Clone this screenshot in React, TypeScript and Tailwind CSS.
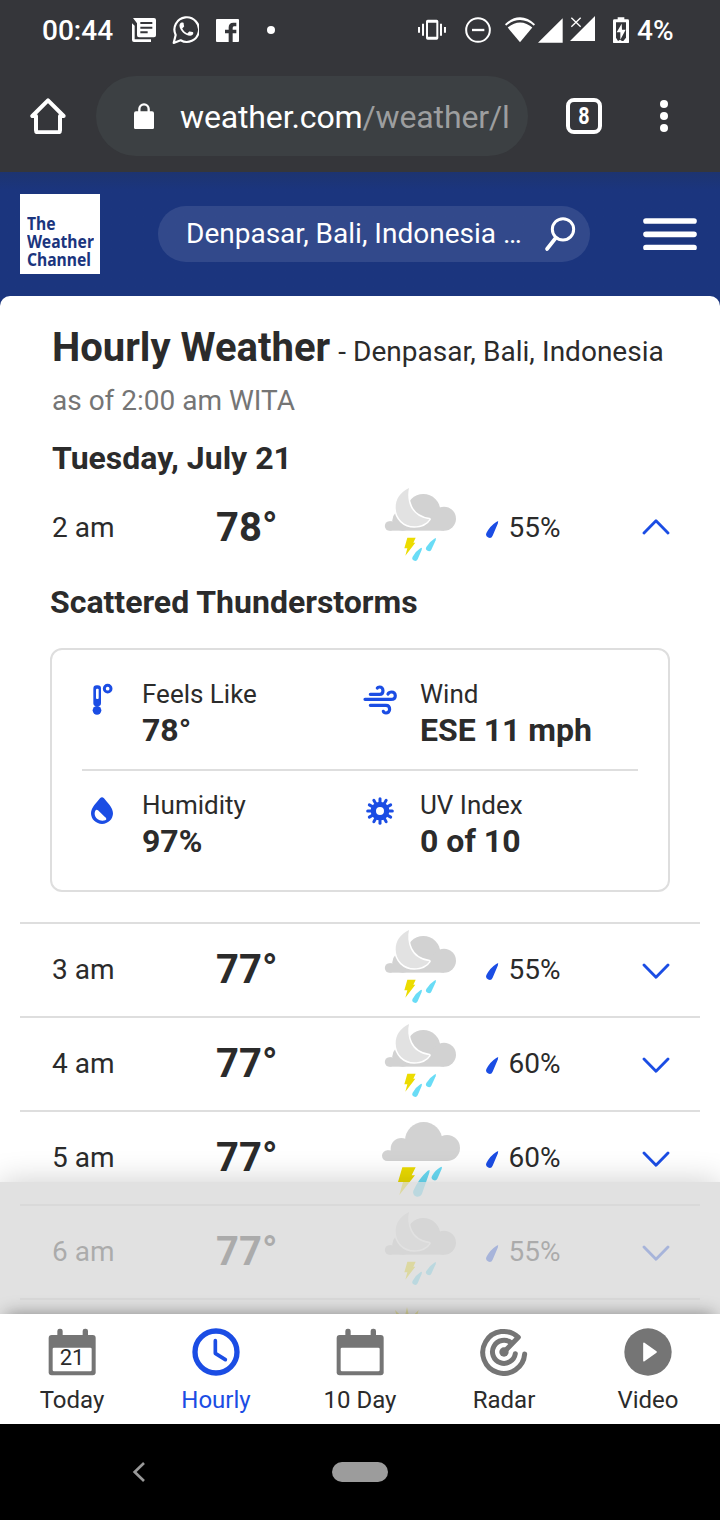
import type { ReactNode } from "react";

type Sky = "moon" | "cloud";

const BLUE = "#1b4de4";

function MoonStorm() {
  return (
    <svg viewBox="0 0 270 270" className="h-[90px] w-[90px]">
      <g fill="#d2d2d2">
        <circle cx="44" cy="138" r="14.500" />
        <circle cx="83" cy="121" r="31" />
        <circle cx="145" cy="93" r="51" />
        <circle cx="207" cy="116" r="36" />
        <rect x="44" y="124" width="163" height="28" />
      </g>
      <path d="M102 24C75 37 62 58 62 82C62 116 88 139 118 139C138 139 155 131 163 118C138 114 117 102 107 80C99 62 98 42 102 24Z" fill="#e2e2e2" stroke="#fff" strokeWidth="9" strokeLinejoin="round" paintOrder="stroke" />
      <path d="M97 173H122L115 188H121L91 227L97 205H88Z" fill="#ecdc00" />
      <path d="M136 205L141 203L140 210L128 238A8 8 0 0 1 113 230Q122 214 136 205Z" fill="#69dcf6" />
      <path d="M178 176L183 174L182 181L169 209A8 8 0 0 1 154 201Q163 185 178 176Z" fill="#69dcf6" />
    </svg>
  );
}

function CloudStorm() {
  return (
    <svg viewBox="45 30 270 270" className="h-[90px] w-[90px]">
      <g fill="#d2d2d2">
        <circle cx="82" cy="167" r="16" />
        <circle cx="124" cy="146" r="32" />
        <circle cx="191" cy="122" r="56" />
        <circle cx="261" cy="144" r="39" />
        <rect x="82" y="151" width="179" height="32" />
        <rect x="124" y="120" width="120" height="40" />
      </g>
      <path d="M127 202H167L155 226H165L118 285L129 246H114Z" fill="#ecdc00" />
      <path d="M203 212L209 210L208 218L186 281A13.500 13.500 0 0 1 160 272Q176 236 203 212Z" fill="#69dcf6" />
      <path d="M241 202L246 200L245 207L232 236A8.500 8.500 0 0 1 216 228Q225 211 241 202Z" fill="#69dcf6" />
    </svg>
  );
}

function SunStorm() {
  return (
    <svg viewBox="45 30 270 270" className="h-[90px] w-[90px] shrink-0">
      <path d="M141 51L150 92H132ZM105 60L130 84L116 98ZM176 60L166 98L152 84Z" fill="#ecdc00" />
      <circle cx="141" cy="114" r="26" fill="#ecdc00" />
    </svg>
  );
}

function Chevron({ up = false }: { up?: boolean }) {
  return (
    <svg viewBox="0 0 84 48" className="h-4 w-7" fill="none" stroke={BLUE} strokeWidth="8.500" strokeLinecap="round" strokeLinejoin="round">
      <path d={up ? "M6 42L42 5L78 42" : "M6 6L42 43L78 6"} />
    </svg>
  );
}

function HourRow({ time, temp, sky, rain, open = false }: { time: string; temp: string; sky: Sky; rain: string; open?: boolean }) {
  return (
    <div className="flex h-[92px] shrink-0 items-center pb-0.5 pl-8 pr-[30px] text-[28px] leading-8">
      <div className="w-[164px] pt-0.5">{time}</div>
      <div className="w-[159px] pt-0.5 text-[40px] font-bold leading-10">{temp}</div>
      <div className="-mt-1 h-[90px] w-[90px] shrink-0">
        {sky === "moon" ? <MoonStorm /> : <CloudStorm />}
      </div>
      <svg viewBox="377 152 38 52" className="ml-[21px] mt-1 h-[17px] w-[12.6px]" fill={BLUE}>
        <path d="M408 155L414 152L413 160L397 197A10 10 0 0 1 378 189Q388 168 408 155Z" />
      </svg>
      <div className="ml-[10px] w-[100px] pt-0.5">{rain}</div>
      <div className={open ? "ml-auto" : "ml-auto pt-1"}>
        <Chevron up={open} />
      </div>
    </div>
  );
}

function Stat({ icon, label, value }: { icon: ReactNode; label: string; value: string }) {
  return (
    <div className="flex">
      <div className="w-[60px] shrink-0">{icon}</div>
      <div>
        <div className="text-[26px] leading-9">{label}</div>
        <div className="text-[32px] font-bold leading-9">{value}</div>
      </div>
    </div>
  );
}

function Tab({ icon, label, active = false }: { icon: ReactNode; label: string; active?: boolean }) {
  return (
    <div className={`flex w-36 flex-col items-center pt-[14px] text-2xl leading-8 ${active ? "text-[#1b4de4]" : "text-[#2b2b2b]"}`}>
      <div className="h-12 w-12">{icon}</div>
      <div className="mt-2">{label}</div>
    </div>
  );
}

function CalendarIcon({ day }: { day?: string }) {
  return (
    <div className="relative h-12 w-12">
      <svg viewBox="144 84 144 144" className="h-12 w-12">
        <rect x="172" y="86" width="16" height="30" rx="7" fill="#757575" />
        <rect x="248" y="86" width="16" height="30" rx="7" fill="#757575" />
        <rect x="146" y="105" width="141" height="121" rx="9" fill="#757575" />
        <rect x="158" y="143" width="117" height="71" rx="4" fill="#fff" />
      </svg>
      {day && <div className="absolute inset-x-0 top-[19px] text-center text-[22px] leading-[22px] text-[#2b2b2b]">{day}</div>}
    </div>
  );
}

function StatusBar() {
  return (
    <div className="flex h-[60px] items-center pl-[42px] pr-[47px] text-[28px] font-medium leading-8">
      <div className="w-[90px] pt-0.5">00:44</div>
      <svg viewBox="396 51 72 78" className="h-[26px] w-6" fill="#fff">
        <path d="M396 70L404 77V118H453V126H402Q396 126 396 120Z" />
        <path d="M399 54H462Q468 54 468 60V106Q468 112 462 112H417Q411 112 411 106V70Z" />
        <path d="M421 69H457M421 83H457M421 97H443" stroke="#35363a" strokeWidth="6" />
      </svg>
      <svg viewBox="517 46 82 88" className="ml-[16px] h-[29.300px] w-[27.300px]">
        <path d="M522 130L528 106A37 37 0 1 1 543 122Z" fill="none" stroke="#fff" strokeWidth="6.500" strokeLinejoin="round" />
        <path transform="translate(532.5 61.500) scale(2.3)" d="M6.620 10.790c1.440 2.830 3.760 5.140 6.590 6.590l2.200-2.200c.27-.27.67-.36 1.020-.24 1.120.37 2.330.57 3.570.57.55 0 1 .45 1 1V17.500c0 1.500-2 3-4 3-6.500 0-14-7.500-14-13.500C3 5 4.500 3 6 3H7.500c.55 0 1 .45 1 1 0 1.250.2 2.450.57 3.570.11.35.03.74-.25 1.020l-2.200 2.200z" fill="#fff" />
      </svg>
      <svg viewBox="650 55 69 69" className="ml-[17px] h-[23px] w-[23px]">
        <rect x="650" y="55" width="69" height="69" rx="3" fill="#fff" />
        <path d="M688 124V98H677V87H688V80Q688 66 702 66H711V77H704Q700 77 700 82V87H711V98H700V124Z" fill="#35363a" />
      </svg>
      <div className="ml-[27.500px] h-2 w-2 rounded-full bg-white" />

      <svg viewBox="174 58 84 64" className="ml-auto h-[21.300px] w-7" fill="#fff">
        <path d="M203 60H230Q235 60 235 65V115Q235 120 230 120H203Q198 120 198 115V65Q198 60 203 60ZM204 69V111H229V69Z" fillRule="evenodd" />
        <path d="M186 72H192V108H186ZM174 82H180V99H174ZM240 72H246V108H240ZM252 82H258V99H252Z" />
      </svg>
      <svg viewBox="315 51 78 78" className="ml-[19px] h-[26px] w-[26px]" fill="none" stroke="#fff" strokeWidth="6">
        <circle cx="354" cy="90" r="35.500" />
        <path d="M336 90H373" strokeWidth="7" />
      </svg>
      <svg viewBox="435 48 272 84" className="ml-[14px] h-7 w-[90.700px]">
        <path d="M480 127L435 73Q456 52 480 52Q504 52 525 73Z" fill="#fff" />
        <path d="M438 82Q480 46 522 82" fill="none" stroke="#35363a" strokeWidth="7" />
        <path d="M534 128H608V55ZM630 123H705V48Z" fill="#fff" />
        <path d="M634 53L662 80M662 53L634 80" stroke="#fff" strokeWidth="4" />
      </svg>
      <svg viewBox="759 50 48 80" className="ml-[17.500px] h-[26.700px] w-4">
        <path d="M773 51H793V57H803Q807 57 807 61V125Q807 129 803 129H763Q759 129 759 125V61Q759 57 763 57H773Z" fill="#fff" />
        <path d="M768 66H798V112L790 122H786L780 118L774 122L768 112Z" fill="#35363a" />
        <path d="M785 70L770 96H781V118L797 88H786Z" fill="#fff" />
      </svg>
      <div className="ml-2 w-9 pt-0.5">4%</div>
    </div>
  );
}

function BrowserBar() {
  return (
    <div className="flex h-[112px] items-center pl-[30px]">
      <svg viewBox="90 294 108 110" className="h-[36.700px] w-9" fill="none" stroke="#fff" strokeWidth="12" strokeLinejoin="round">
        <path d="M144 301L97 348H108V391Q108 397 114 397H174Q180 397 180 391V348H191Z" />
      </svg>
      <div className="ml-[30px] flex h-20 w-[432px] items-center rounded-full bg-[#3c4043] pl-[38px]">
        <svg viewBox="402 308 60 80" className="h-[26.700px] w-5">
          <rect x="402" y="333" width="60" height="54" rx="6" fill="#fff" />
          <path d="M418 336V326A14 14 0 0 1 446 326V336" fill="none" stroke="#fff" strokeWidth="7" />
        </svg>
        <div className="ml-[26px] whitespace-nowrap pt-0.5 text-[32px] leading-10 tracking-[-0.13px]">
          weather.com<span className="text-[#9d9e9f]">/weather/l</span>
        </div>
      </div>
      <div className="ml-[38px] flex h-9 w-9 items-center justify-center rounded-lg border-4 border-white text-2xl font-bold leading-6">
        <span className="inline-block scale-x-[.82]">8</span>
      </div>
      <div className="ml-[58px] flex flex-col gap-1">
        <i className="h-2 w-2 rounded-full bg-white" />
        <i className="h-2 w-2 rounded-full bg-white" />
        <i className="h-2 w-2 rounded-full bg-white" />
      </div>
    </div>
  );
}

function SiteHeader() {
  return (
    <div className="flex h-[124px] items-start bg-gradient-to-b from-[#1d3470] to-[#1b357e] to-[18px] pl-5 pt-[22px]">
      <div className="h-20 w-20 bg-white pl-[7px] pt-5 text-[18px] font-bold leading-[18px] text-[#1b357e]" style={{ fontFamily: '"Noto Sans", sans-serif' }}>
        <div className="origin-left scale-x-[.87]">
          <div>The</div>
          <div>Weather</div>
          <div>Channel</div>
        </div>
      </div>
      <div className="ml-[58px] mt-3 flex h-14 w-[432px] items-center rounded-full bg-white/10 pl-7 text-[28px] leading-8">
        <div className="w-[358px] whitespace-nowrap">Denpasar, Bali, Indonesia …</div>
        <svg viewBox="552 138 96 108" className="h-9 w-8" fill="none" stroke="#fff" strokeLinecap="round">
          <circle cx="609" cy="178" r="32" strokeWidth="9" />
          <path d="M587 204L561 237" strokeWidth="11" />
        </svg>
      </div>
      <svg viewBox="849 143 162 98" className="ml-[53px] mt-[23.700px] h-[32.700px] w-[54px]" stroke="#fff" strokeWidth="17" strokeLinecap="round">
        <path d="M858 152H1002M858 192H1002M858 232H1002" />
      </svg>
    </div>
  );
}

const RAYS = Array.from({ length: 12 }, (_, i) => i * 30);

function DetailCard() {
  return (
    <div className="mx-[50px] h-[244px] shrink-0 rounded-xl border-2 border-[#dedede] px-[30px] pt-[26px]">
      <div className="flex h-[95px] border-b-2 border-[#dedede]">
        <div className="w-[278px]">
          <Stat
            label="Feels Like"
            value="78°"
            icon={
              <svg viewBox="150 120 78 108" className="ml-2 mt-1 h-9 w-[26px]">
                <rect x="160" y="136" width="23" height="63" rx="10" fill={BLUE} />
                <rect x="168" y="146" width="8" height="31" rx="3" fill="#fff" />
                <circle cx="171" cy="211" r="13" fill={BLUE} />
                <circle cx="203" cy="146" r="10" fill="none" stroke={BLUE} strokeWidth="9" />
              </svg>
            }
          />
        </div>
        <Stat
          label="Wind"
          value="ESE 11 mph"
          icon={
            <svg viewBox="38 126 106 102" className="ml-[3px] mt-[6px] h-[34px] w-[35.300px]" fill="none" stroke={BLUE} strokeWidth="9.500" strokeLinecap="round">
              <path d="M44 178H122C131 178 135 173 135 167C135 160 130 156 124 156C119 156 115 158 113 162" />
              <path d="M60 163H88C95 163 98 158 98 152C98 145 93 141 88 141C85 141 82 142 81 144" />
              <path d="M60 196H107C115 196 118 201 118 208C118 215 113 219 107 219C103 219 100 217 99 214" />
            </svg>
          }
        />
      </div>
      <div className="flex pt-4">
        <div className="w-[278px]">
          <Stat
            label="Humidity"
            value="97%"
            icon={
              <svg viewBox="152 472 66 82" className="ml-[8.600px] mt-[10px] h-[27.300px] w-[22px]">
                <path d="M179 476Q185 470 191 476C200 488 218 504 218 521A33 32 0 0 1 152 521C152 504 170 488 179 476Z" fill={BLUE} />
                <path d="M165 513C160 522 163 541 186 543C193 543 198 541 198 538Q198 534 193 531L173 512Q168 508 165 513Z" fill="#fff" />
              </svg>
            }
          />
        </div>
        <Stat
          label="UV Index"
          value="0 of 10"
          icon={
            <svg viewBox="-42 -42 84 84" className="ml-[6px] mt-[10px] h-7 w-7" stroke={BLUE} fill="none">
              <circle r="20" strokeWidth="16" />
              {RAYS.map((a) => (
                <path key={a} d="M0 -22V-37" strokeWidth="9" strokeLinecap="round" transform={`rotate(${a})`} />
              ))}
            </svg>
          }
        />
      </div>
    </div>
  );
}

export default function App() {
  return (
    <div className="flex h-[1520px] w-[720px] flex-col overflow-hidden bg-[#1b357e] text-[#2b2b2b]" style={{ fontFamily: "Roboto, sans-serif" }}>
      <div className="shrink-0 bg-[#35363a] text-white">
        <StatusBar />
        <BrowserBar />
      </div>
      <div className="shrink-0 text-white">
        <SiteHeader />
      </div>

      <main className="relative flex h-[1018px] shrink-0 flex-col overflow-hidden rounded-t-[10px] bg-white">
        <h1 className="flex items-baseline whitespace-nowrap pl-[52px] pt-[29px] leading-[46px]">
          <span className="text-[40px] font-bold">Hourly Weather</span>
          <span className="ml-2 text-[28px] [word-spacing:0.3px]">- Denpasar, Bali, Indonesia</span>
        </h1>
        <div className="mt-[10px] pl-[52px] text-[28px] leading-8 text-[#757575]">as of 2:00 am WITA</div>
        <h2 className="mt-[21px] pl-[52px] text-[32px] font-bold leading-10">Tuesday, July 21</h2>
        <div className="mt-1 px-5">
          <HourRow time="2 am" temp="78°" sky="moon" rain="55%" open />
        </div>
        <h3 className="mb-[26px] mt-2 pl-[50px] text-[32px] font-bold leading-10">Scattered Thunderstorms</h3>
        <DetailCard />
        <div className="mx-5 mt-[30px] flex flex-col divide-y-2 divide-[#dedede] border-t-2 border-[#dedede]">
          <div><HourRow time="3 am" temp="77°" sky="moon" rain="55%" /></div>
          <div><HourRow time="4 am" temp="77°" sky="moon" rain="60%" /></div>
          <div><HourRow time="5 am" temp="77°" sky="cloud" rain="60%" /></div>
          <div><HourRow time="6 am" temp="77°" sky="moon" rain="55%" /></div>
          <div className="flex h-[14px] items-start overflow-hidden pl-[355px]">
            <SunStorm />
          </div>
        </div>
        <div className="absolute inset-x-0 bottom-0 h-[132px] bg-[#d7d7d7]/75 shadow-[0_0_30px_rgba(0,0,0,0.2)]" />
      </main>

      <nav className="relative flex h-[110px] shrink-0 bg-white shadow-[0_-6px_16px_-6px_rgba(0,0,0,0.4)]">
        <Tab label="Today" icon={<CalendarIcon day="21" />} />
        <Tab
          active
          label="Hourly"
          icon={
            <svg viewBox="576 84 144 144" className="h-12 w-12" fill="none" stroke={BLUE}>
              <circle cx="648" cy="156" r="63" strokeWidth="16" />
              <path d="M646 122V160L676 179" strokeWidth="11" strokeLinecap="round" strokeLinejoin="round" />
            </svg>
          }
        />
        <Tab label="10 Day" icon={<CalendarIcon />} />
        <Tab
          label="Radar"
          icon={
            <svg viewBox="360 84 144 144" className="h-12 w-12" fill="none" stroke="#757575" strokeWidth="15" strokeLinecap="round" strokeLinejoin="round">
              <path d="M494 162A63 63 0 1 1 475 112L432 156" />
              <path d="M466 161A34.500 34.500 0 1 1 454 129" />
              <circle cx="432" cy="156" r="14" fill="#757575" stroke="none" />
            </svg>
          }
        />
        <Tab
          label="Video"
          icon={
            <svg viewBox="792 84 144 144" className="h-12 w-12">
              <circle cx="864" cy="156" r="71" fill="#757575" />
              <path d="M852 130L888 156L852 182Z" fill="#fff" stroke="#fff" strokeWidth="5" strokeLinejoin="round" />
            </svg>
          }
        />
      </nav>

      <div className="flex h-24 shrink-0 items-center bg-black pl-[132px]">
        <svg viewBox="396 486 39 60" className="h-5 w-[13px]" fill="none" stroke="#999" strokeWidth="8">
          <path d="M432 489L404 516L432 543" />
        </svg>
        <div className="ml-[187px] h-5 w-14 rounded-full bg-[#9c9c9c]" />
      </div>
    </div>
  );
}
